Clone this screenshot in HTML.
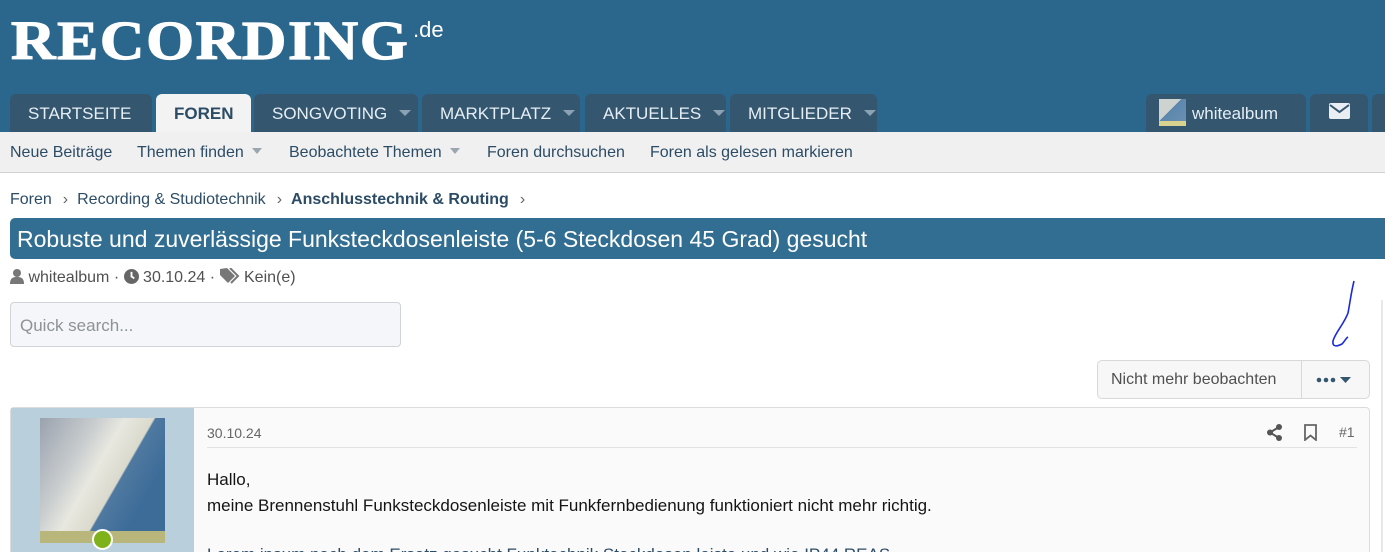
<!DOCTYPE html>
<html><head><meta charset="utf-8"><style>
*{box-sizing:border-box;margin:0;padding:0}
html,body{width:1385px;height:552px;overflow:hidden}
body{background:#fff;font-family:"Liberation Sans",sans-serif;color:#141414;position:relative}
.hdr{position:absolute;left:0;top:0;width:1385px;height:132px;background:#2b668c}
.logo{position:absolute;left:11px;top:9px;font-family:"Liberation Serif",serif;font-weight:bold;font-size:55px;color:#fff;letter-spacing:1.5px;-webkit-text-stroke:1.2px #fff;white-space:nowrap;transform:scaleX(1.12);transform-origin:left top}
.de{position:absolute;left:413px;top:17px;color:#fff;font-size:22px}
.tab{position:absolute;top:94px;height:38px;background:#34566f;border-radius:6px 6px 0 0;color:#e6eef4;font-size:17px;line-height:40px;padding-left:18px}
.tab .c{display:inline-block;width:0;height:0;border-left:6px solid transparent;border-right:6px solid transparent;border-top:6px solid #8aa2b4;margin-left:12px;vertical-align:3px}
.tab.act{background:#f3f3f3;color:#2c4c66;font-weight:bold}
.sub{position:absolute;left:0;top:132px;width:1385px;height:41px;background:#f0f0f0;border-bottom:1px solid #d0d0d0;font-size:16px;color:#2c4c66}
.sub span{position:absolute;top:12px}
.sub .c{display:inline-block;border-left:5px solid transparent;border-right:5px solid transparent;border-top:6px solid #9aa6b0;margin-left:8px;vertical-align:3px}
.bc{position:absolute;top:191px;left:10px;font-size:16px;color:#2c4c66;white-space:nowrap}
.bc i{font-style:normal;color:#666;margin:0 9px 0 11px}
.title{position:absolute;left:10px;top:218px;width:1375px;height:41px;background:#326e91;border-radius:5px 0 0 5px;color:#fff;font-size:23px;line-height:42px;padding-left:7px}
.meta{position:absolute;left:10px;top:268px;font-size:16px;color:#505050}
.qs{position:absolute;left:10px;top:302px;width:391px;height:45px;background:#f4f6f9;border:1px solid #d0d4d8;border-radius:4px;font-size:17px;color:#8e9296;padding:13px 0 0 9px}
.btn{position:absolute;left:1097px;top:360px;width:273px;height:39px;border:1px solid #d8d8d8;border-radius:5px;background:#f7f7f7;font-size:16px;color:#505050}
.post{position:absolute;left:10px;top:407px;width:1360px;height:160px;border:1px solid #dcdcdc;border-radius:4px;background:#fafafa}
.ucol{position:absolute;left:0;top:0;width:183px;height:160px;background:#bacfdc}
</style></head><body>
<div class="hdr">
<div class="logo">RECORDING</div><div class="de">.de</div>
<div class="tab" style="left:10px;width:142px">STARTSEITE<span class="c"></span></div>
<div class="tab act" style="left:156px;width:95px;color:#2c4c66">FOREN</div>
<div class="tab" style="left:254px;width:164px">SONGVOTING<span class="c"></span></div>
<div class="tab" style="left:422px;width:158px">MARKTPLATZ<span class="c"></span></div>
<div class="tab" style="left:585px;width:141px">AKTUELLES<span class="c"></span></div>
<div class="tab" style="left:730px;width:147px">MITGLIEDER<span class="c"></span></div>
<div class="tab" style="left:1146px;width:160px;padding-left:13px"><span style="display:inline-block;width:27px;height:27px;vertical-align:-7px;background:linear-gradient(135deg,#cfd3d0 45%,#5c87ad 46%,#6b8fb3);border-bottom:5px solid #d9d38f;margin-right:6px"></span>whitealbum</div>
<div class="tab" style="left:1310px;width:58px;padding-left:19px"><svg width="21" height="16" viewBox="0 0 21 16"><rect x="0" y="0" width="21" height="16" rx="2" fill="#e8eef2"/><path d="M1 2l9.5 7L20 2" stroke="#34566f" stroke-width="2" fill="none"/></svg></div>
<div class="tab" style="left:1372px;width:20px"></div>
</div>
<div class="sub">
<span style="left:10px">Neue Beiträge</span>
<span style="left:137px">Themen finden<i class="c"></i></span>
<span style="left:289px">Beobachtete Themen<i class="c"></i></span>
<span style="left:487px">Foren durchsuchen</span>
<span style="left:650px">Foren als gelesen markieren</span>
</div>
<div class="bc">Foren<i>›</i>Recording &amp; Studiotechnik<i>›</i><b>Anschlusstechnik &amp; Routing</b><i>›</i></div>
<div class="title">Robuste und zuverlässige Funksteckdosenleiste (5-6 Steckdosen 45 Grad) gesucht</div>
<div class="meta"><svg width="14" height="15" viewBox="0 0 14 15" style="vertical-align:-2px"><circle cx="7" cy="4" r="4" fill="#777"/><path d="M0 15c0-6 3-7 7-7s7 1 7 7z" fill="#777"/></svg> whitealbum · <svg width="15" height="15" viewBox="0 0 16 16" style="vertical-align:-2px"><circle cx="8" cy="8" r="8" fill="#666"/><path d="M8 3v5l3 2" stroke="#fff" stroke-width="2" fill="none"/></svg> 30.10.24 · <svg width="20" height="16" viewBox="0 0 20 16" style="vertical-align:-2px"><path d="M0 1v6l8 8 7-7-8-8z" fill="#777"/><path d="M10 0l8 8-7 7" stroke="#777" stroke-width="2" fill="none"/></svg> Kein(e)</div>
<div class="qs">Quick search...</div>
<svg style="position:absolute;left:1320px;top:278px" width="40" height="72"><path d="M34 3C31 15 30 25 28 35C24 46 15 55 13 63C12 70 18 68 22 66C25 63 26 60 28 59" stroke="#1a2bd8" stroke-width="1.6" fill="none"/></svg>
<div class="btn"><span style="position:absolute;left:13px;top:10px">Nicht mehr beobachten</span><div style="position:absolute;left:203px;top:0;width:1px;height:37px;background:#d8d8d8"></div><svg style="position:absolute;left:218px;top:16px" width="40" height="8"><circle cx="3" cy="3" r="2.3" fill="#34566f"/><circle cx="10" cy="3" r="2.3" fill="#34566f"/><circle cx="17" cy="3" r="2.3" fill="#34566f"/><path d="M24 0h11l-5.5 6z" fill="#34566f"/></svg></div>
<div style="position:absolute;left:1381px;top:300px;width:2px;height:252px;background:#e8e8e8"></div>
<div class="post">
<div class="ucol"><div style="position:absolute;left:29px;top:10px;width:125px;height:125px;background:linear-gradient(120deg,#9aa2ae 0,#c8ccce 30%,#e8e8e0 45%,#dad9cc 60%,#4f79a0 61%,#3d6c99 80%);border-bottom:12px solid #b8b67a"></div><div style="position:absolute;left:81px;top:121px;width:21px;height:21px;border-radius:50%;background:#7fb21a;border:2px solid #fff"></div></div>
<div style="position:absolute;left:196px;top:17px;font-size:14px;color:#666">30.10.24</div>
<div style="position:absolute;left:196px;top:39px;width:1150px;height:1px;background:#e2e2e2"></div>
<svg style="position:absolute;left:1256px;top:16px" width="16" height="17" viewBox="0 0 16 17"><circle cx="12" cy="3" r="3" fill="#555"/><circle cx="3" cy="8.5" r="3" fill="#555"/><circle cx="12" cy="14" r="3" fill="#555"/><path d="M12 3L3 8.5L12 14" stroke="#555" stroke-width="2" fill="none"/></svg>
<svg style="position:absolute;left:1293px;top:16px" width="13" height="17" viewBox="0 0 13 17"><path d="M1 1h11v15l-5.5-4.5L1 16z" stroke="#666" stroke-width="1.8" fill="none"/></svg>
<div style="position:absolute;left:1328px;top:16px;color:#666;font-size:14px">#1</div>
<div style="position:absolute;left:196px;top:59px;font-size:17px;line-height:26px;color:#141414">Hallo,<br>meine Brennenstuhl Funksteckdosenleiste mit Funkfernbedienung funktioniert nicht mehr richtig.</div>
<div style="position:absolute;left:196px;top:137px;font-size:17px;color:#2c4c66">Lorem ipsum nach dem Ersatz gesucht Funktechnik Steckdosen leiste und wie IP44 REAS</div>
</div>
</body></html>
